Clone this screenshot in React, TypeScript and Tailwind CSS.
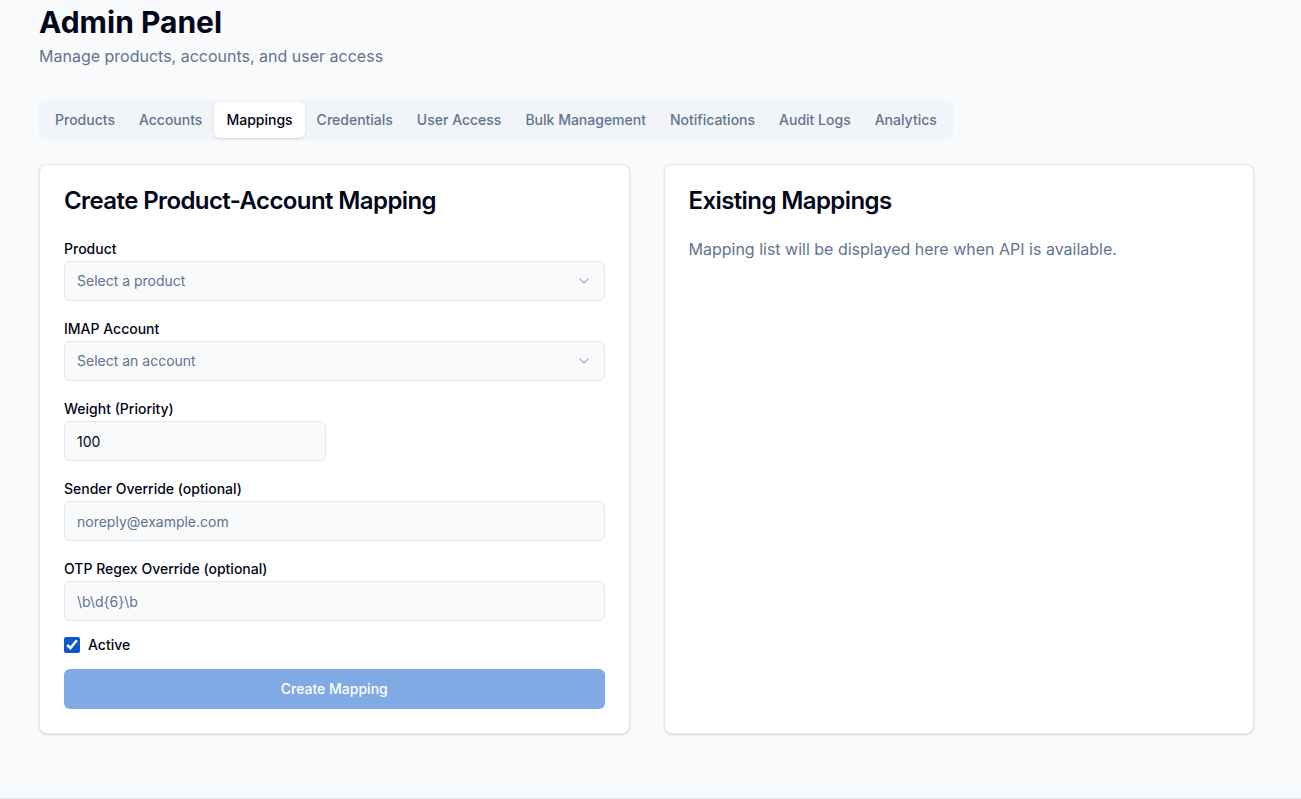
import React from "react";
import { ChevronDown } from "lucide-react";

const tabs = [
  "Products",
  "Accounts",
  "Mappings",
  "Credentials",
  "User Access",
  "Bulk Management",
  "Notifications",
  "Audit Logs",
  "Analytics",
];

function Field({ label, children }: { label: string; children: React.ReactNode }) {
  return (
    <div>
      <label className="block text-sm font-medium leading-6 text-slate-950">{label}</label>
      {children}
    </div>
  );
}

function SelectBox({ placeholder }: { placeholder: string }) {
  return (
    <button
      type="button"
      className="flex h-10 w-full items-center justify-between rounded-md border border-slate-200 bg-slate-50 px-3 text-sm text-slate-500"
    >
      <span>{placeholder}</span>
      <ChevronDown className="h-4 w-4 opacity-50" />
    </button>
  );
}

const inputCls =
  "flex h-10 w-full rounded-md border border-slate-200 bg-slate-50 px-3 text-sm text-slate-950 placeholder:text-slate-500 outline-none";

export default function App() {
  return (
    <div
      className="min-h-[799px] border-b border-[#e2e8f0] bg-slate-50"
      style={{ fontFamily: "Inter, 'Noto Sans', sans-serif" }}
    >
      <div className="ml-[39px] w-[1216px] pt-[4px]">
        <h1 className="text-3xl font-bold text-slate-950">Admin Panel</h1>
        <p className="mt-1 text-base text-slate-500">Manage products, accounts, and user access</p>

        <div className="mt-8 inline-flex h-10 items-center rounded-lg bg-slate-100 px-1">
          {tabs.map((t) => (
            <div
              key={t}
              className={
                t === "Mappings"
                  ? "flex h-9 items-center rounded-md bg-white px-3 text-sm font-medium text-slate-950 shadow-sm"
                  : "flex h-9 items-center rounded-md px-3 text-sm font-medium text-slate-500"
              }
            >
              {t}
            </div>
          ))}
        </div>

        <div className="mt-6 grid w-[1215px] grid-cols-2 gap-[34px]">
          <div className="rounded-lg border border-slate-200 bg-white shadow-sm">
            <div className="p-6">
              <h2 className="text-2xl font-semibold leading-none tracking-tight text-slate-950">
                Create Product-Account Mapping
              </h2>
            </div>
            <div className="space-y-4 px-6 pb-6">
              <Field label="Product">
                <SelectBox placeholder="Select a product" />
              </Field>
              <Field label="IMAP Account">
                <SelectBox placeholder="Select an account" />
              </Field>
              <div className="grid grid-cols-2 gap-4">
                <Field label="Weight (Priority)">
                  <input className={inputCls} defaultValue="100" />
                </Field>
              </div>
              <Field label="Sender Override (optional)">
                <input className={inputCls} placeholder="noreply@example.com" />
              </Field>
              <Field label="OTP Regex Override (optional)">
                <input className={inputCls} placeholder="\b\d{6}\b" />
              </Field>
              <div className="flex h-4 items-center gap-2">
                <input type="checkbox" defaultChecked className="m-0 h-4 w-4 accent-[#0b57d0]" />
                <span className="text-sm font-medium text-slate-950">Active</span>
              </div>
              <button
                type="button"
                className="flex h-10 w-full items-center justify-center rounded-md bg-[#80aae4] text-sm font-medium text-white"
              >
                Create Mapping
              </button>
            </div>
          </div>

          <div className="rounded-lg border border-slate-200 bg-white shadow-sm">
            <div className="p-6">
              <h2 className="text-2xl font-semibold leading-none tracking-tight text-slate-950">
                Existing Mappings
              </h2>
            </div>
            <div className="px-6 pb-6">
              <p className="text-base text-slate-500">
                Mapping list will be displayed here when API is available.
              </p>
            </div>
          </div>
        </div>
      </div>
    </div>
  );
}
